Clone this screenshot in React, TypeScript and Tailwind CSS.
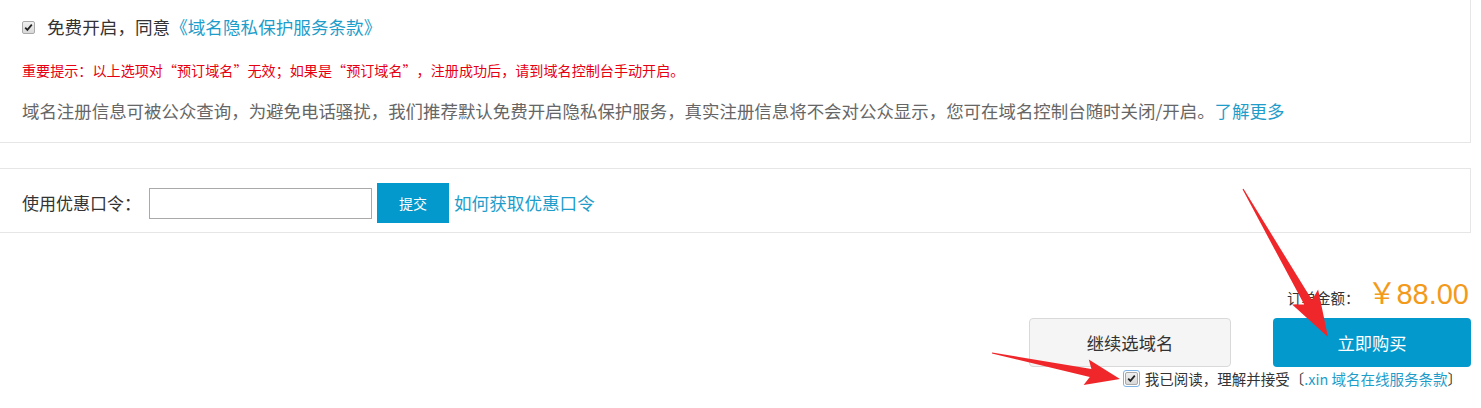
import React from "react";

type Pt = [number, number];

function arrowPoints(T: Pt, P: Pt, h: number, w: number, sw: number): string {
  const dx = P[0] - T[0];
  const dy = P[1] - T[1];
  const L = Math.sqrt(dx * dx + dy * dy);
  const d: Pt = [dx / L, dy / L];
  const n: Pt = [-d[1], d[0]];
  const N: Pt = [P[0] - d[0] * h, P[1] - d[1] * h];
  const B: Pt = [P[0] - d[0] * h * 1.15, P[1] - d[1] * h * 1.15];
  const pts: Pt[] = [
    [T[0] + n[0] * 0.6, T[1] + n[1] * 0.6],
    [N[0] + n[0] * sw, N[1] + n[1] * sw],
    [B[0] + n[0] * w, B[1] + n[1] * w],
    P,
    [B[0] - n[0] * w, B[1] - n[1] * w],
    [N[0] - n[0] * sw, N[1] - n[1] * sw],
    [T[0] - n[0] * 0.6, T[1] - n[1] * 0.6],
  ];
  return pts.map((p) => `${p[0].toFixed(1)},${p[1].toFixed(1)}`).join(" ");
}

function CheckBox({ focused }: { focused?: boolean }) {
  return (
    <span
      className={
        focused
          ? "inline-flex items-center justify-center w-[17px] h-[17px] rounded-[3px] border border-[#7fb2e5] bg-white shrink-0"
          : "inline-flex items-center justify-center w-[13px] h-[13px] shrink-0"
      }
    >
      <span className="inline-flex items-center justify-center w-[13px] h-[13px] rounded-[2px] border border-[#a9a9a9] bg-gradient-to-b from-[#f0f0f0] to-[#d8d8d8]">
        <svg width="9" height="9" viewBox="0 0 9 9">
          <path d="M1.2 4.6 L3.4 6.9 L7.8 1.6" fill="none" stroke="#222" strokeWidth="1.7" />
        </svg>
      </span>
    </span>
  );
}

export default function App() {
  return (
    <div
      className="relative w-[1481px] h-[408px] bg-white overflow-hidden text-[#333] [text-spacing-trim:space-all]"
      style={{ fontFamily: '"Noto Sans CJK SC", "Noto Sans", sans-serif' }}
    >
      {/* Panel 1 */}
      <div className="w-[1471px] h-[143px] border-b border-r border-[#e6e6e6] pl-[22px] flex flex-col">
        <div className="mt-[12px] h-[30px] flex items-center">
          <CheckBox />
          <span className="ml-[12px] text-[17.6px] leading-[30px] text-[#333] whitespace-nowrap">
            免费开启，同意<span className="text-[#1f9dca]">《域名隐私保护服务条款》</span>
          </span>
        </div>
        <div className="mt-[18px] h-[20px] text-[14.1px] leading-[20px] text-[#e60012] whitespace-nowrap [font-feature-settings:'fwid']">
          重要提示：以上选项对“预订域名”无效；如果是“预订域名”，注册成功后，请到域名控制台手动开启。
        </div>
        <div className="mt-[19px] h-[24px] text-[17.45px] leading-[24px] text-[#666] whitespace-nowrap">
          域名注册信息可被公众查询，为避免电话骚扰，我们推荐默认免费开启隐私保护服务，真实注册信息将不会对公众显示，您可在域名控制台随时关闭/开启。
          <span className="text-[#1f9dca]">了解更多</span>
        </div>
      </div>

      {/* Panel 2 */}
      <div className="mt-[25px] w-[1471px] h-[65px] border-t border-b border-r border-[#e6e6e6] pl-[22px] pt-[5px] flex items-center">
        <span className="text-[17px] text-[#333] leading-[24px] whitespace-nowrap">使用优惠口令：</span>
        <input
          type="text"
          className="ml-[8px] w-[223px] h-[31px] border border-[#a9a9a9] bg-white outline-none"
        />
        <button className="ml-[5px] w-[72px] h-[40px] bg-[#0399cc] text-white text-[14px]">提交</button>
        <span className="ml-[5px] text-[17.6px] leading-[24px] text-[#1f9dca] whitespace-nowrap">如何获取优惠口令</span>
      </div>

      {/* Order area */}
      <div className="w-[1471px] flex flex-col items-end">
        <div className="mt-[47px] h-[29px] pr-[2px] flex items-baseline">
          <span className="text-[14.5px] text-[#333]">订单金额：</span>
          <span
            className="ml-[8px] text-[29px] leading-[29px] text-[#f39a1a]"
            style={{ fontFamily: '"Liberation Sans", "Noto Sans CJK SC", sans-serif' }}
          >
            ￥88.00
          </span>
        </div>
        <div className="mt-[9px] flex gap-[42px]">
          <button className="w-[202px] h-[49px] rounded-[4px] border border-[#d9d9d9] bg-[#f5f5f5] text-[17.3px] text-[#333]">
            继续选域名
          </button>
          <button className="w-[198px] h-[49px] rounded-[4px] bg-[#0399cc] text-[17.3px] text-white">
            立即购买
          </button>
        </div>
        <div className="mt-[3px] h-[17px] pr-[9px] flex items-center">
          <CheckBox focused />
          <span className="ml-[5px] text-[14.5px] leading-[17px] text-[#333] whitespace-nowrap">
            我已阅读，理解并接受〔<span className="text-[#1f9dca]">.xin 域名在线服务条款</span>〕
          </span>
        </div>
      </div>

      {/* Annotation arrows */}
      <svg className="absolute inset-0 pointer-events-none" width="1481" height="408">
        <polygon points={arrowPoints([1243, 189], [1328, 337], 40, 15, 4.5)} fill="#f0272a" />
        <polygon points={arrowPoints([992, 353], [1120, 379], 30, 13, 4)} fill="#f0272a" />
      </svg>
    </div>
  );
}
